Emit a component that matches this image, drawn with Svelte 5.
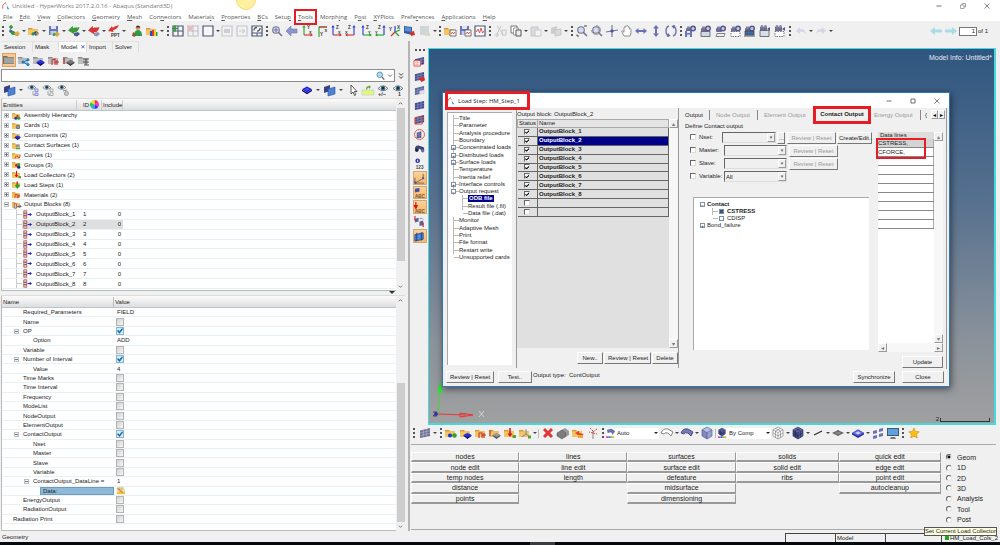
<script>
  const I = {};
  const folder = (c = '#f2c462', d = '#d99a35') =>
    `<path d="M0 3h4l1 1h5v6H0z" fill="${d}"/><path d="M0 4.5l10-.5v6H0z" fill="${c}"/>`;
  const grayFolder = folder('#bdbdbd', '#8a8a8a');
  const disk = '<path d="M1 1h9v9H1z" fill="#6a74b8"/><path d="M3 1h5v3H3z" fill="#dfe3f4"/><path d="M2.500 6h6v4h-6z" fill="#c3c9e6"/>';
  const mesh = (c = '#434c86', l = '#9aa2cc') =>
    `<path d="M1 3.500L11 1v8L1 11z" fill="${c}"/><path d="M4.300 2.700v7.600M7.600 1.900v7.800M1 6l10-2.400M1 8.500l10-2.200" stroke="${l}" stroke-width=".6" fill="none"/>`;
  const diamond = (c = '#1818c8', t = '#3f4bf0', d = '#0b0b78') =>
    `<path d="M1 6.500l5 3 5-3v1.500l-5 3.200L1 8z" fill="${d}"/><path d="M1 6.200L6 3.500l5 2.700-5 3z" fill="${c}"/><path d="M3 6.200L6 4.600l3 1.600-3 1.700z" fill="${t}"/>`;
  const smallDiamond = (c, d) => `<path d="M3.500 8l4-2.200L11.500 8l-4 3.500z" fill="${c}"/><path d="M3.500 8l4 2 4-2v1l-4 3-4-3z" fill="${d}"/>`;
  const dots = '<circle cx="5" cy="9.500" r="2" fill="#2730c8"/><circle cx="9" cy="9.500" r="2.200" fill="#2aa52a"/><circle cx="7.200" cy="7" r="1.600" fill="#d23a2a"/>';
  const hook = (c) => `<path d="M0 5.500L4.500 1l.7 2C7.500 2 9.500 3 11.500 2 10 7 8 7.500 6 7.200l.6 2.300z" fill="${c}"/>`;
  const cam = '<rect x="1" y="3" width="6" height="4" rx="1" fill="#6b6d95"/><circle cx="8" cy="3.500" r="3" fill="#56598c"/><circle cx="8" cy="3.500" r="1.500" fill="#c9cce8"/><rect x="2" y="1.500" width="3" height="2" fill="#8587a8"/>';
  const eye = '<path d="M1 4.500Q6-1 11 4.500 6 9 1 4.500z" fill="#e8eef2" stroke="#66727a" stroke-width=".9"/><circle cx="6" cy="4.200" r="2.200" fill="#39627e"/><circle cx="6" cy="4" r=".9" fill="#111"/>';
  const cube = (a, b, c, l) =>
    `<path d="M6 0l5 2.800-5 2.800L1 2.800z" fill="${a}"/><path d="M1 2.800l5 2.800V12L1 9z" fill="${b}"/><path d="M11 2.800L6 5.600V12l5-3z" fill="${c}"/><path d="M6 0l5 2.800V9l-5 3-5-3V2.800zM1 2.800l5 2.800 5-2.800M6 5.600V12${l === '#777' || l === '#222a5a' ? 'M3.500 1.400l5 2.800v6.400M8.500 1.400l-5 2.800v6.400M1 6l5 2.900L11 6' : ''}" fill="none" stroke="${l}" stroke-width=".6"/>`;
  const zoomG = '<circle cx="5" cy="5" r="3.300" fill="#d5daf0" stroke="#73758c" stroke-width="1.100"/><path d="M7.500 7.500L11 11" stroke="#73758c" stroke-width="1.600"/>';
  const axis = (v, h, r, lv, lh) =>
    `<g fill="none" stroke-width="1.100"><path d="M${r ? 9 : 3} 10V2" stroke="${v}"/><path d="M${r ? 9 : 3} 10H${r ? 1 : 11}" stroke="${h}"/></g><path d="M${r ? 9 : 3} 0l1.600 2.500h-3.200z" fill="${v}"/><path d="M${r ? 0 : 12} 10l${r ? '2.500-1.600v3.200' : '-2.500-1.600v3.200'}z" fill="${h}"/><text x="${r ? 3 : 6}" y="4" font-size="4.500" font-weight="700" font-family="Liberation Sans" fill="#333">${lv}</text><text x="${r ? 0 : 8}" y="8.500" font-size="4" font-weight="700" font-family="Liberation Sans" fill="#333">${lh}</text>`;

  I.new = '<path d="M2 4l9 6-2 1-8-4z" fill="#4a57a8"/><circle cx="5" cy="8" r="2" fill="#2c9a3b"/><path d="M6 8l4-2 2 3-4 2z" fill="#e1ad3b"/><path d="M1 2h4M3 0v4" stroke="#2b9a2b" stroke-width="1.500"/>';
  I.open = folder() + '<path d="M4 8l4-2 3 2-3 3z" fill="#4a57a8"/><circle cx="5" cy="9" r="1.600" fill="#2c9a3b"/><path d="M8 7l3 2-2 2z" fill="#d9a02e"/>';
  I.save = disk + '<path d="M6 9l3-2 3 2-3 3z" fill="#d9a940"/><circle cx="6" cy="9.500" r="1.500" fill="#3aa04a"/>';
  I.imp = hook('#3c9a3a') + '<path d="M6 8l4-1 2 2-3 2.500-3-1z" fill="#4b5791"/>';
  I.exp = hook('#d93434') + '<path d="M6 8l4-1 2 2-3 2.500-3-1z" fill="#8b93b8"/>';
  I.ppt = '<path d="M0 6l4-5 .6 1.800C7 1 9 1 11 0 9 4 7 5 5 5l.6 2z" fill="#d93434"/><text x="3" y="11.500" font-size="4.500" font-weight="700" font-family="Liberation Sans" fill="#333">PPT</text>';
  I.user = '<circle cx="7" cy="3" r="2.300" fill="#d9a06c"/><path d="M4.500 2.500Q7-1.500 9.500 2.500z" fill="#40302a"/><path d="M3 11q0-6 4-6t4 6z" fill="#2f9a48"/><path d="M2 7l3 2-1 3-3-1z" fill="#8c5a36"/>';
  I.chart = folder() + '<path d="M4 6h2v5H4z" fill="#2a50c8"/><path d="M6 5h2v6H6z" fill="#e03c2a"/><path d="M8 6h2v5H8z" fill="#f0d22a"/><path d="M10 7h1.500v4H10z" fill="#2ea04a"/>';
  const win = '<path d="M1 1h10v10H1z" fill="#f4f6fb" stroke="#4e5675" stroke-width="1.200"/>';
  I.addwin = win + '<path d="M1 6h10M6 1v10" stroke="#4e5675"/><path d="M0 3.500h6M3 .5v6" stroke="#2f9a2f" stroke-width="1.700"/>';
  I.delwin = '<g opacity=".3">' + win + '<path d="M1 6h10M6 1v10" stroke="#4e5675"/><path d="M1 1l5 5M6 1L1 6" stroke="#d22" stroke-width="1.500"/></g>';
  I.win = win;
  I.fade1 = '<g opacity=".25">' + win + '<path d="M3 4h6v4H3z" fill="#667"/></g>';
  I.fade2 = '<g opacity=".25">' + win + '<path d="M3 6h5M6 4l3 2-3 2" stroke="#667" fill="none"/></g>';
  I.syncwin = win + '<path d="M1 8h10M6 8v3" stroke="#4e5675"/><path d="M3 5.500q0-3 3-3M9 3q0 3-3 3" stroke="#555" fill="none" stroke-width="1.300"/>';
  I.fit = zoomG + '<path d="M5 2.800v4.400M2.800 5h4.400" stroke="#5a5f95" stroke-width=".8"/>';
  I.back = '<path d="M0 6l5-5v3h6v4H5v3z" fill="#8d95cf" stroke="#6e76b4" stroke-width=".6"/>';
  I.ax1 = axis('#1fa52c', '#d8312c', 0, 'Y', 'X');
  I.ax2 = '<path d="M3 12V2H11" fill="none" stroke="#1fa52c" stroke-width="1.100"/><path d="M3 2h8" stroke="#d8312c" stroke-width="1.200"/><text x="4" y="10.500" font-size="4.500" font-weight="700" font-family="Liberation Sans" fill="#333">Y</text><text x="8.500" y="6.500" font-size="4" font-weight="700" font-family="Liberation Sans" fill="#333">X</text>';
  I.ax3 = axis('#2a38d8', '#d8312c', 0, 'Z', 'X');
  I.ax4 = axis('#2a38d8', '#d8312c', 1, 'Z', 'X');
  I.ax5 = axis('#2a38d8', '#1fa52c', 0, 'Z', 'Y');
  I.ax6 = axis('#2a38d8', '#1fa52c', 1, 'Z', 'Y');
  I.iso = '<path d="M6 7V1" stroke="#2a38d8" stroke-width="1.200"/><path d="M6 7l5-2M6 7l4 4" stroke="#1fa52c" stroke-width="1.200"/><path d="M6 7L2 11" stroke="#d8312c" stroke-width="1.200"/><text x="0" y="6" font-size="4.500" font-weight="700" font-family="Liberation Sans" fill="#333">Y</text><text x="8" y="4" font-size="4.500" font-weight="700" font-family="Liberation Sans" fill="#333">X</text>';
  I.sheet = '<path d="M0 1l8 1v8L0 8z" fill="#2e5fa6"/><path d="M1 2l6 .8v4L1 6z" fill="#5d8fd2"/><path d="M6 7l4-1 1 4-4 1z" fill="#cf3430"/>';
  I.photo = '<g opacity=".3"><path d="M1 1h9v9H1z" fill="#89a"/><circle cx="6" cy="5" r="2.500" fill="#7a9"/><path d="M6 8l5 0v3H6z" fill="#9a6"/></g>';
  const doc = '<path d="M6 5h6v6H6z" fill="#fff" stroke="#555" stroke-width=".8"/><path d="M7 9l1.500-2 1 2L11 7" stroke="#c33" fill="none" stroke-width=".8"/>';
  I.opendoc = folder() + doc;
  I.savedoc = disk + doc;
  I.plot = '<path d="M1 1h10v10H1z" fill="#fff" stroke="#4e5675" stroke-width="1.200"/><path d="M2 7l2-3 1.500 4L7 3l1.500 5L10 6" stroke="#e05252" fill="none"/>';
  I.cut = '<g opacity=".25" stroke="#445" fill="none"><path d="M2 1l6 8M6 1L2 9"/><circle cx="2" cy="10" r="1.300"/><path d="M7 5h4v5H7z"/></g>';
  I.copy = '<path d="M1 1h6v7H1z" fill="#fff" stroke="#777"/><path d="M3.500 3h5v7h-5z" fill="#fff" stroke="#777" stroke-width=".7"/><path d="M6 5h5v6H6z" fill="#eee" stroke="#555"/>';
  I.paste = '<g opacity=".25"><path d="M1 2h7v9H1z" fill="#99a" stroke="#556"/><path d="M5 5h6v6H5z" fill="#fff" stroke="#556"/></g>';
  I.pasteb = '<g opacity=".25"><path d="M1 3l6-2v7l-6 1z" fill="#667"/><path d="M5 5l6-1v6l-6 1z" fill="#99a" stroke="#556"/></g>';
  I.zoomw = zoomG + '<path d="M1 11V9.500M1 11h2M8 1h3" stroke="#444" stroke-width="1"/>';
  I.zoomc = zoomG + '<path d="M5 .5a4.500 4.500 0 1 1-4.500 4.500" fill="none" stroke="#888" stroke-width=".8"/>';
  I.pan = '<path d="M6 0v12M0 7l12-2" stroke="#6a70a8" stroke-width="1.100"/><path d="M6 4l2 2-2 2-2-2z" fill="#4f5690"/>';
  I.hand = '<path d="M3 11L.7 6.500q0-1 1-.5L3 7.300V2.500q.7-1 1.300 0V1.300q.9-1 1.500 0V1q.9-.9 1.500.3v1q.9-.7 1.400.3V4q1-.5 1.300.5V8L9 11z" fill="#fff" stroke="#777" stroke-width=".8"/>';
  I.horiz = '<path d="M0 6l3.500-3v2h5V3L12 6 8.500 9V7h-5v2z" fill="#6b71b5"/>';
  I.vert = '<path d="M6 0l3 3.500H7v5h2L6 12 3 8.500h2v-5H3z" fill="#6b71b5"/>';
  I.rot = '<path d="M4 1q-3 1-3 5t3 5M8 11q3-1 3-5T8 1" fill="none" stroke="#7379b5" stroke-width="1.500"/><path d="M3 8l2.500 3L2 12zM9 4L6.500 1 10 0z" fill="#5e64a5"/>';
  I.cam1 = cam + '<path d="M0 6h7v6H0z" fill="#6a74b8"/><path d="M2 6h3v2H2zM2 9.500h3V12H2z" fill="#e6e9f6"/>';
  I.cam2 = cam + '<path d="M1 6.500h9v5H1z" fill="#cfd8e6" stroke="#555" stroke-width=".8"/>';
  I.cam3 = cam + '<path d="M2 8.500h8l-1 3H1z" fill="#eee" stroke="#666" stroke-width=".8"/>';
  I.cam4 = cam + '<path d="M1 6.500h9v5H1z" fill="#fff" stroke="#555" stroke-width=".8" stroke-dasharray="1.500 1"/>';
  I.cam5 = cam + '<path d="M1 6h9v4H1z" fill="#3e6ca8" stroke="#444" stroke-width=".8"/><path d="M0 11h11" stroke="#555"/>';
  const vid = '<path d="M1 2h7v4H1z" fill="#6b6d95"/><path d="M8 4l3-2v4z" fill="#56598c"/><circle cx="3" cy="1.500" r="1.500" fill="#8587a8"/><circle cx="6.500" cy="1.500" r="1.500" fill="#8587a8"/>';
  I.cam6 = vid + '<path d="M1 5.500h9v6H1z" fill="#d6e0ec" stroke="#555" stroke-width=".8"/>';
  I.cam7 = vid + '<path d="M1 6.500h9v5H1z" fill="#fff" stroke="#555" stroke-width=".8" stroke-dasharray="1.500 1"/>';
  I.undo = '<path d="M1 6l4-4v2q5-.5 6 5-2-3-6-2v2z" fill="#c9c9e2" opacity=".7"/>';
  I.redo = '<path d="M11 6L7 2v2Q2 3.500 1 9q2-3 6-2v2z" fill="#c9c9e2" opacity=".7"/>';
  I.left = '<path d="M0 6l5-4v2.500h7v3H5V10z" fill="#a9dbe8"/>';
  I.right = '<path d="M12 6L7 2v2.500H0v3h7V10z" fill="#a9dbe8"/>';

  I.gf = '<path d="M0 2h4l1 1h6v7H0z" fill="#6f6f6f"/><path d="M1 3.500l10 0v6H1z" fill="#a2a2a2"/>';
  I.gnodes = grayFolder + '<path d="M5 8l5-2M5 8l5 3" stroke="#1b7fc8"/><circle cx="5" cy="8" r="1.500" fill="#1b7fc8"/><circle cx="10" cy="5.800" r="1.500" fill="#1b7fc8"/><circle cx="10" cy="10.500" r="1.500" fill="#1b7fc8"/>';
  I.gcomp = grayFolder + smallDiamond('#2731dd', '#101080');
  I.gmat = grayFolder + '<path d="M4 11V6l3-1v6M7 8h4M9 6v5" stroke="#c9302c" fill="none" stroke-width="1.100"/>';
  I.gprop = grayFolder + '<path d="M1 4v6" stroke="#b22" stroke-width="1.200"/>' + smallDiamond('#777', '#444');
  I.gcard = grayFolder + '<path d="M5 5h6M5 8h6M6 11h5M8 5v6" stroke="#555" stroke-width="1.200"/>';
  I.mesh = '<path d="M0 3l6-2v6l-6 2z" fill="#39447e"/><path d="M4 5l7-2v7l-7 2z" fill="#4a83d8" stroke="#2b4f94" stroke-width=".6"/>';
  const eyeS = '<g transform="scale(.8)">' + eye + '</g>';
  I.eyet1 = eyeS + '<path d="M6 7v4h2" stroke="#888" fill="none" stroke-width=".7"/><path d="M8 5h3v2.500H8zM8 9h3v2.500H8z" fill="#dfe4ff" stroke="#66c" stroke-width=".7"/>';
  I.eyet2 = eyeS + '<path d="M6 7v4h2" stroke="#888" fill="none" stroke-width=".7"/><path d="M8 5h3v2.500H8zM8 9h3v2.500H8z" fill="#fff" stroke="#888" stroke-width=".7"/>';
  I.eyet3 = eyeS + '<path d="M6 7l4-1M7 10h4" stroke="#888" fill="none"/><circle cx="9.500" cy="9.500" r="2" fill="#ccc" stroke="#888" stroke-width=".7"/>';
  I.comp = '<path d="M1 5.500l5 3 5-3v1.500l-5 3.200L1 7z" fill="#0b0b78"/><path d="M1 5.200L6 2.500l5 2.700-5 3z" fill="#1818c8"/><path d="M3 5.200L6 3.600l3 1.600-3 1.700z" fill="#3f4bf0"/>';
  I.cursor = '<path d="M4 1v9l2-2 1.500 3.500 1.300-.6L7.400 7.500H10z" fill="#fff" stroke="#333" stroke-width=".8"/>';
  I.yellow = '<path d="M0 6h12v5H0z" fill="#f3f07a" stroke="#9be3dc" stroke-width=".7"/><path d="M4 5q0-3 3-3V1l2 2-2 2V3.500Q5 3.500 5 6z" fill="#69a83e"/>';
  I.eyepm = eye + '<text x="1" y="12" font-size="5.500" font-weight="700" font-family="Liberation Sans" fill="#333">+/−</text>';
  I.eye1 = eye + '<text x="6" y="12" font-size="5" font-weight="700" font-family="Liberation Sans" fill="#333">1</text>';

  I.v1 = mesh() + '<path d="M0 5h7v6H0z" fill="#fff" stroke="#e0493a"/><path d="M1 7h5M1 9h5M3.500 6v5" stroke="#e88" stroke-width=".6"/>';
  I.v2 = mesh() + '<path d="M5 8l6-2 1 4-4 2z" fill="#d22b2b"/>';
  I.v3 = mesh('#5a6296') + '<path d="M6 6.500l5-1.300V9L6 10.500z" fill="#dde"/>';
  I.v4 = mesh('#3d4790');
  I.v5 = mesh() + '<path d="M1 4h8v7H1z" fill="none" stroke="#e0493a"/>';
  I.v6 = '<circle cx="6" cy="6" r="5.400" fill="#f4f4f4" stroke="#e0493a"/><path d="M3 4l5-1.500v7L3 10z" fill="#434c86"/><path d="M5.500 3v7M3 6l5-1M3 8l5-1" stroke="#9aa2cc" stroke-width=".6"/>';
  I.v7 = '<path d="M1 7Q1 2 6 3l5 2v4L9 9 6 6 4 9z" fill="#3b4673"/><circle cx="3" cy="8" r="1.800" fill="#20264a"/><circle cx="9.500" cy="8.500" r="1.800" fill="#5b6fb5"/>';
  I.v8 = '<circle cx="4" cy="3" r="2.500" fill="#2730b8"/><path d="M4 1.800v2.500" stroke="#fff"/><text x="2" y="12" font-size="5" font-weight="700" font-family="Liberation Sans" fill="#444">123</text>';
  I.v9 = '<path d="M1 5v6l9-5V1M1 11h10" fill="none" stroke="#6a5a4a" stroke-width=".9"/><circle cx="1.500" cy="10.500" r="1.300" fill="#4a52a0"/><circle cx="10" cy="5.500" r="1.200" fill="#4a52a0"/>';
  I.v10 = '<path d="M1 2l5-1v4L1 6z" fill="#4250a8"/><text x="1" y="11.500" font-size="5" font-weight="700" font-family="Liberation Sans" fill="#7a5030">ABC</text>';
  I.v11 = '<path d="M2 0v5M.5 4L2 7l1.500-3z" stroke="#d11" fill="#d11" stroke-width="1.200"/><text x="1" y="11.500" font-size="5" font-weight="700" font-family="Liberation Sans" fill="#7a5030">ABC</text>';
  I.v12 = '<path d="M1 3l4-1v4L1 7zM6 6l4-1v5L6 11z" fill="#5a6296"/><path d="M1 0v5M10 7v5" stroke="#c22" stroke-width="1.200"/><path d="M6 3q3-2 4 1" fill="none" stroke="#888"/>';
  I.v13 = '<path d="M1 4l9-2v7l-9 2z" fill="#4b8be0" stroke="#2b4f94"/><path d="M3 2v9M8 1.500v9" stroke="#24407c"/>';

  I.bmesh = mesh('#6d7292', '#b5b9cf');
  I.bassem = folder() + '<circle cx="5" cy="8.500" r="2" fill="#2730c8"/><circle cx="9.500" cy="8.500" r="2.300" fill="#2aa52a"/>';
  I.bcomp = folder() + smallDiamond('#2731dd', '#101080');
  I.bmat = folder() + '<path d="M4 11V6h3v5M7 8h4M9 6v5" stroke="#c9302c" fill="none" stroke-width="1.100"/>';
  I.bprop = folder() + '<path d="M1 3v6" stroke="#b22"/>' + smallDiamond('#999', '#555');
  I.bload = folder() + '<path d="M6 1v7" stroke="#d11" stroke-width="1.500"/><path d="M3.500 6.500h5L6 10z" fill="#d11"/><path d="M8.500 8h3.500v3H8.500z" fill="#54a52e"/>';
  I.bsys = folder() + '<path d="M7 2v5l4 3M7 7l-4 3" stroke="#7a88a8" fill="none"/><path d="M9 8.500h3v3H9z" fill="#54a52e"/>';
  I.del = '<path d="M3 1l3 3 3-3 2 2L8.200 6 11 9 9 11 6 8.200 3 11 1 9l2.800-3L1 3z" fill="#dc3838"/>';
  I.card = '<path d="M3 4l5-3 4 3v4l-5 3z" fill="#9a9a9a"/><path d="M0 6l5-3 4 3v3l-4 3-5-3z" fill="#7c7c7c" stroke="#555" stroke-width=".5"/>';
  I.org = folder() + '<path d="M3 6l4-2v2l5 1-5 3-1-2z" fill="#e0432a"/><path d="M6 8h5v3H6z" fill="#f2a53a"/>';
  I.renum = '<path d="M6 4v8" stroke="#999" stroke-width="1.200"/><path d="M6 4L3 1M6 5l4-3M6 6l4 1M6 6L2 5" stroke="#d44" stroke-dasharray="2 1"/>';
  const bar = '<path d="M0 10h3v2H0z" fill="#d33ad3"/><path d="M3 10h2v2H3z" fill="#3a5fe0"/><path d="M5 10h2v2H5z" fill="#2ec05a"/><path d="M7 10h3v2H7z" fill="#f0b02a"/>';
  I.geo = '<path d="M1 2l6-1 4 3-3 4-2-3-4 1z" fill="#6a72ae"/>' + bar;
  I.elem = '<g transform="scale(.8)">' + cube('#6a70a8', '#3f4678', '#535b94', '#222a5a') + '</g>' + bar;
  I.surfw = '<path d="M0 6q2-5 7-4l5 3-2 4-3-3q-3-1-4 1z" fill="#fff" stroke="#777" stroke-width=".9"/>';
  I.surf = '<path d="M0 6q2-5 7-4l5 3-2 4-3-3q-3-1-4 1z" fill="#737bb8" stroke="#3f4678" stroke-width=".9"/>';
  I.solid = cube('#b9bfe4', '#8289bf', '#9aa1d2', '#4a5190');
  I.wcube = cube('#fff', '#fff', '#fff', '#777');
  I.scube = cube('#6a70a8', '#3f4678', '#535b94', '#222a5a');
  I.line = '<path d="M2 8l8-4" stroke="#333" stroke-width="1.300"/>';
  I.plane = '<path d="M0 6l6-3 6 3-6 3z" fill="#666"/><path d="M3 4.500l6 3M9 4.500l-6 3" stroke="#aaa" stroke-width=".6"/>';
  I.plate = '<path d="M0 6l6-3.500L12 6v1.500L6 11 0 7.500z" fill="#2a3296"/><path d="M0 6l6-3.500L12 6 6 9z" fill="#5b66dc"/><path d="M3 6l3-1.700L9 6 6 7.500z" fill="#c8cdf8"/>';
  I.shrink = '<path d="M1 4l4-1v3L1 7zM7 2l4-1v3L7 5zM1 9l4-1v3l-4 1zM7 7l4-1v3l-4 1z" fill="#6a72b2"/>';
  I.monitor = '<path d="M0 1h12v8H0z" fill="#4d5560"/><path d="M1 2h10v6H1z" fill="#58a5e6"/><path d="M4 10h4l1 2H3z" fill="#777"/>';
  I.star = '<path d="M6 1l1.500 3.400 3.700.4-2.700 2.500.8 3.700L6 9.200 2.700 11l.8-3.700L.8 4.800l3.700-.4z" fill="#fbbf10" stroke="#d08a10" stroke-width=".6"/>';

  I.tAssembly = folder() + dots;
  I.tCards = folder() + '<circle cx="8" cy="8" r="3" fill="#777"/><circle cx="8" cy="8" r="1" fill="#ccc"/>';
  I.tComponents = folder() + smallDiamond('#2731dd', '#101080');
  I.tContact = folder() + '<path d="M5 5h5v3H5z" fill="#8a92c0"/><path d="M5 9h6v2H5z" fill="#44a844"/>';
  I.tCurves = folder() + '<path d="M4 10q2-6 4-2t3-3" fill="none" stroke="#b33" stroke-width="1.100"/>';
  I.tGroups = folder() + '<circle cx="6" cy="7" r="2" fill="#d22"/><circle cx="9" cy="6" r="2" fill="#2a2"/><circle cx="9" cy="9.500" r="2.200" fill="#222c88"/>';
  I.tLoads = I.bload;
  I.tSteps = folder() + '<path d="M7 2v6" stroke="#d22" stroke-width="2"/><path d="M4 7l3-2 4 2-4 5z" fill="#2aa52a"/>';
  I.tMaterials = I.bmat;
  I.tOutput = folder() + '<path d="M3 5h3v6H3z" fill="#d9c4c4" stroke="#744" stroke-width=".8"/><path d="M7 8.500h5M10 6.500l2 2-2 2" stroke="#22c" fill="none"/>';
  I.block = '<path d="M1 1h4v10H1z" fill="#f4d0d0" stroke="#a33" stroke-width=".9"/><path d="M1 4.300h4M1 7.600h4" stroke="#333"/><path d="M6 6h5M9 4l2 2-2 2" stroke="#2222cc" fill="none" stroke-width="1.300"/>';
  I.data = '<path d="M1 6h11v5H1z" fill="#f3c23f"/><path d="M1 1h10v7H1z" fill="#e9e2c8"/><path d="M1 4h10M5 1v7M8 1v7" stroke="#b99a58" stroke-width=".6"/><path d="M2 3l7 6" stroke="#d88a1a" stroke-width="1.500"/>';
  I.wheel = '<path d="M6 6V0a6 6 0 0 1 5.200 3z" fill="#f33"/><path d="M6 6l5.200-3a6 6 0 0 1 0 6z" fill="#e3c"/><path d="M6 6l5.200 3A6 6 0 0 1 6 12z" fill="#33e"/><path d="M6 6v6a6 6 0 0 1-5.200-3z" fill="#2ad"/><path d="M6 6L.8 9a6 6 0 0 1 0-6z" fill="#2c4"/><path d="M6 6L.8 3A6 6 0 0 1 6 0z" fill="#ed3"/>';
  I.logo = '<path d="M1 10Q0 3 6 1" fill="none" stroke="#e0443c" stroke-width="1.300"/><path d="M7 5l4 6H8z" fill="#2aa6de"/><path d="M5 2l3 3" stroke="#f0a03a"/>';
  I.search = '<circle cx="5" cy="5" r="3.700" fill="#a8dcf2" stroke="#5a8fb0" stroke-width="1.200"/><path d="M8 8l3 3.500" stroke="#666" stroke-width="1.700"/>';
  I.chev = '<path d="M2 4l4 4 4-4" fill="none" stroke="#444" stroke-width="1.600"/>';
  I.chevup = '<path d="M2 8l4-4 4 4" fill="none" stroke="#444" stroke-width="1.800"/>';
  I.dchev = '<path d="M3 2l3 3 3-3M3 6.500l3 3 3-3" fill="none" stroke="#444" stroke-width="1.500"/>';
  I.min = '<path d="M1 6h10" stroke="#444" stroke-width="1.500"/>';
  I.max = '<path d="M2 2h8v8H2z" fill="none" stroke="#444" stroke-width="1.500"/>';
  I.restore = '<path d="M1 4h7v7H1zM4 4V1h7v7H8" fill="none" stroke="#777" stroke-width="1.300"/>';
  I.close = '<path d="M1 1l10 10M11 1L1 11" stroke="#555" stroke-width="1.400"/>';

  const menus = ['_File', '_Edit', '_View', '_Collectors', '_Geometry', '_Mesh', 'Con_nectors', 'Materia_ls', '_Properties', '_BCs', 'Setu_p', '_Tools', 'Morph_ing', 'P_ost', '_XYPlots', 'Prefe_rences', '_Applications', '_Help'].map((m) => {
    const i = m.indexOf('_');
    return [m.slice(0, i), m[i + 1], m.slice(i + 2)];
  });
  const top = [
    { w: 120, grip: true, items: 'new ^ open ^ save ^ imp ^ exp ^ ppt ^' },
    { w: 36, pad: true, items: 'user chart ^' },
    { w: 93, grip: true, items: 'addwin delwin win ^ fade1 fade2 syncwin' },
    { w: 167, grip: true, items: 'fit back ax1 ax2 ax3 ax4 ax5 ax6 iso sheet photo ^' },
    { w: 44, grip: true, items: 'opendoc savedoc plot' },
    { w: 76, grip: true, items: 'cut copy ^ paste ^ pasteb ^' },
    { w: 103, grip: true, items: 'zoomw zoomc pan hand horiz vert rot' },
    { w: 103, grip: true, items: 'cam1 cam2 cam3 cam4 cam5 cam6 cam7' },
    { w: 40, grip: true, items: 'undo ^ redo ^' }
  ];
  const entities = [
    ['tAssembly', 'Assembly Hierarchy'], ['tCards', 'Cards (1)'], ['tComponents', 'Components (2)'], ['tContact', 'Contact Surfaces (1)'],
    ['tCurves', 'Curves (1)'], ['tGroups', 'Groups (3)'], ['tLoads', 'Load Collectors (2)'], ['tSteps', 'Load Steps (1)'],
    ['tMaterials', 'Materials (2)'], ['tOutput', 'Output Blocks (8)']
  ];
  const blocks = [1, 2, 3, 4, 5, 6, 7, 8];
  const props = [
    [1, 'Required_Parameters', 'FIELD'], [1, 'Name', false], [1, 'OP', true, '-'], [2, 'Option', 'ADD'], [1, 'Variable', false],
    [1, 'Number of Interval', true, '-'], [2, 'Value', '4'], [1, 'Time Marks', false], [1, 'Time Interval', false], [1, 'Frequency', false],
    [1, 'ModeList', false], [1, 'NodeOutput', false], [1, 'ElementOutput', false], [1, 'ContactOutput', true, '-'], [2, 'Nset', false],
    [2, 'Master', false], [2, 'Slave', false], [2, 'Variable', false], [2, 'ContactOutput_DataLine =', '1', '-'], [3, 'Data:', null],
    [1, 'EnergyOutput', false], [1, 'RadiationOutput', false], [0, 'Radiation Print', false]
  ];
  const steps = [
    ['Title'], ['Parameter'], ['Analysis procedure'], ['Boundary'], ['Concentrated loads', '+'], ['Distributed loads', '+'], ['Surface loads', '+'],
    ['Temperature'], ['Inertia relief'], ['Interface controls', '+'], ['Output request', '−'], ['ODB file', '', 1], ['Result file (.fil)', '', 1],
    ['Data file (.dat)', '', 1], ['Monitor'], ['Adaptive Mesh'], ['Print'], ['File format'], ['Restart write'], ['Unsupported cards']
  ];
  const panel = [
    ['nodes', 'node edit', 'temp nodes', 'distance', 'points'],
    ['lines', 'line edit', 'length'],
    ['surfaces', 'surface edit', 'defeature', 'midsurface', 'dimensioning'],
    ['solids', 'solid edit', 'ribs'],
    ['quick edit', 'edge edit', 'point edit', 'autocleanup']
  ];
  const pages = ['Geom', '1D', '2D', '3D', 'Analysis', 'Tool', 'Post'];
  let page = $state('Geom');
</script>

{#snippet ico(k)}<svg class="ico" viewBox="0 0 12 12" aria-hidden="true">{@html I[k]}</svg>{/snippet}

{#snippet tools(list)}
  {#each list.split(' ') as t}
    {#if t === '^'}<span class="caret"></span>
    {:else}<button class="tool" aria-label={t}>{@render ico(t)}</button>{/if}
  {/each}
{/snippet}

{#snippet scroll(top, size)}
  <div class="scroll">
    {@render ico('chevup')}
    <div class="track"><i style="top:{top}%;height:{size}%"></i></div>
    {@render ico('chev')}
  </div>
{/snippet}

<div class="app">
  <header>
    <div class="title">
      {@render ico('logo')}<span>Untitled - HyperWorks 2017.2.0.16 - Abaqus (Standard3D)</span>
      <div class="winbtns">
        {#each ['min', 'restore', 'close'] as b}<button aria-label={b}>{@render ico(b)}</button>{/each}
      </div>
    </div>
    <i class="halo"></i>
    <nav>
      {#each menus as [a, u, b]}<button class:marked={u === 'T'}>{a}<u>{u}</u>{b}</button>{/each}
    </nav>
    <div class="toolbar">
      {#each top as g}
        {#if g.grip}<i class="grip"></i>{/if}
        <div class="group" class:pad={g.pad} style="width:{g.w}px">{@render tools(g.items)}</div>
      {/each}
      <div class="pager">
        {@render tools('left right')}
        <input aria-label="Page" value="1" /><span>of 1</span>
      </div>
    </div>
  </header>

  <main>
    <section class="left">
      <div class="tabs">
        <button class="t1">Session</button><button class="t2">Mask</button><button class="t3 on">Model<b>✕</b></button><button class="t2">Import</button><button class="t2">Solver</button>
      </div>
      <div class="views">{@render tools('gf gnodes gcomp gmat gprop gcard')}</div>
      <div class="search">
        <div class="field"><input aria-label="Search" />{@render ico('search')}{@render ico('chev')}</div>
        {@render ico('dchev')}
      </div>
      <div class="filters">
        {@render tools('mesh ^ eyet1 eyet2 eyet3')}
        <span class="push"></span>
        {@render tools('comp ^ mesh ^ cursor yellow eyepm eye1')}
      </div>

      <div class="pane ents">
        <div class="list">
          <div class="head"><span class="c1">Entities</span><span class="c2">ID</span><span class="c3">{@render ico('wheel')}</span><span class="c4">Include</span></div>
          <div class="rows">
            {#each entities as [k, name], i}
              <div class="row"><i class="box" class:open={i === 9}></i>{@render ico(k)}<span class="lbl">{name}</span></div>
            {/each}
            {#each blocks as n}
              <div class="row sub">
                <i class="twig"></i>
                <div class="hit" class:sel={n === 2}>{@render ico('block')}<span class="bn">OutputBlock_{n}</span><span class="id">{n}</span><span class="inc">0</span></div>
              </div>
            {/each}
          </div>
        </div>
        {@render scroll(0, 88)}
      </div>
      <div class="split"><i></i></div>
      <div class="pane props">
        <div class="list">
          <div class="head"><span class="p1">Name</span><span>Value</span></div>
          <div class="rows">
            {#each props as [d, name, v, box]}
              <div class="row">
                <span class="pname d{d}" class:hot={v === null}>{#if box}<i class="box open"></i>{/if}{name}</span>
                {#if v === null}<button class="mini" aria-label="Edit data">{@render ico('data')}</button>
                {:else if typeof v === 'boolean'}<input class="glass" type="checkbox" checked={v} aria-label={name} />
                {:else}<span class="pval">{v}</span>{/if}
              </div>
            {/each}
          </div>
        </div>
        {@render scroll(36, 64)}
      </div>
    </section>

    <section class="right">
      <div class="work">
        <aside><i class="grip h"></i>
          <div class="vtools">
            {#each Array.from({ length: 13 }, (_, i) => i + 1) as n}
              <button class="tool" class:lit={[9, 10, 11, 13].includes(n)} aria-label="View {n}">{@render ico('v' + n)}</button>
            {/each}
          </div>
        </aside>
        <div class="canvas">
          <span class="info">Model Info: Untitled*</span>
          <svg class="triad" viewBox="0 0 56 50" aria-hidden="true">
            <path d="M9 40L11 12" stroke="#3ddc3d" /><path d="M11 6l3 13H8z" fill="#3ddc3d" />
            <path d="M9 40l28 1" stroke="#e33" /><path d="M44 41l-13-2v4z" fill="none" stroke="#e33" />
            <circle cx="7" cy="40" r="2" fill="#33c" /><path d="M4 38h4l-4 4h4" fill="none" stroke="#335" stroke-width=".8" />
            <path d="M50 37l5 6M55 37l-5 6" stroke="#ddd" stroke-width=".8" />
          </svg>
          <div class="scale"><span>2</span><i></i></div>

          <div class="dialog" role="dialog" aria-label="Load Step">
            <div class="dtitle">
              <span class="dname marked">{@render ico('logo')}Load Step: HM_Step_1</span>
              <div class="dbtns">{#each ['min', 'max', 'close'] as b}<button aria-label={b}>{@render ico(b)}</button>{/each}</div>
            </div>
            <div class="dbody">
              <div class="steps">
                <div class="steprows">
                  {#each steps as [t, b, sub], i}
                    <div class="step" class:child={sub}><i class="twig" class:end={i === 13 || i === 19}></i>{#if b}<i class="pm">{b}</i>{/if}<span class:pick={i === 11}>{t}</span></div>
                  {/each}
                </div>
              </div>
              <div class="mid">
                <div class="cap">Output block: OutputBlock_2</div>
                <div class="grid">
                  <div class="gtable">
                    <table>
                      <thead><tr><th class="st">Status</th><th>Name</th></tr></thead>
                      <tbody>
                        {#each [...blocks, 0, 0] as n}
                          <tr class:active={n === 2}><td class="st"><input type="checkbox" class="chk" checked={n > 0} aria-label="Status" /></td><td>{n ? 'OutputBlock_' + n : ''}</td></tr>
                        {/each}
                      </tbody>
                    </table>
                  </div>
                  <div class="oldscroll"><button aria-label="Up">▴</button><button aria-label="Down">▾</button></div>
                </div>
                <div class="acts"><button class="btn n">New..</button><button class="btn">Review | Reset</button><button class="btn n">Delete</button></div>
              </div>
              <div class="det">
                <div class="dtabs">
                  <button class="a">Output</button><button class="b dim">Node Output</button><button class="c dim">Element Output</button><button class="d marked">Contact Output</button><button class="e dim">Energy Output</button><span class="sq">&#123;</span>
                  <span class="arrows"><button aria-label="Previous">◂</button><button aria-label="Next">▸</button></span>
                </div>
                <div class="cap2">Define Contact output</div>
                <div class="cols">
                  <div class="formcol">
                    <div class="form">
                      {#each ['Nset:', 'Master:', 'Slave:', 'Variable:'] as f, i}
                        <div class="frow">
                          <label><input type="checkbox" class="chk" />{f}</label>
                          <div class="combo"><select aria-label={f}><option>{i === 3 ? 'All' : ''}</option></select><i>▾</i></div>
                          {#if i === 0}<button class="btn dots" aria-label="Browse">...</button>{/if}
                          {#if i < 3}<button class="btn dim rr">Review | Reset</button>{/if}
                          {#if i === 0}<button class="btn ce">Create/Edit..</button>{/if}
                        </div>
                      {/each}
                    </div>
                    <div class="ctree">
                      <div class="step"><i class="pm">−</i><b>Contact</b></div>
                      <div class="step child"><i class="twig"></i><input type="checkbox" class="cb" id="cs" checked /><label for="cs"><b>CSTRESS</b></label></div>
                      <div class="step child"><i class="twig end"></i><input type="checkbox" class="cb" id="cd" /><label for="cd">CDISP</label></div>
                      <div class="step"><i class="pm">+</i><span>Bond_failure</span></div>
                    </div>
                  </div>
                  <div class="lines">
                    <div class="lbody">
                      <div class="ltab">
                        <table>
                          <thead><tr><th>Data lines</th></tr></thead>
                          <tbody>
                            {#each ['CSTRESS,', 'CFORCE,', '', '', '', '', '', '', '', ''] as l, i}<tr><td class:first={i === 0}>{l}</td></tr>{/each}
                          </tbody>
                        </table>
                        <i class="frame"></i>
                      </div>
                      <div class="oldscroll"><button aria-label="Up">▴</button><button aria-label="Down">▾</button></div>
                    </div>
                    <div class="oldscroll hz"><button aria-label="Left">◂</button><button aria-label="Right">▸</button></div>
                    <button class="btn upd">Update</button>
                  </div>
                </div>
              </div>
            </div>
            <div class="dfoot">
              <button class="btn w48">Review | Reset</button><button class="btn w34">Test..</button><span>Output type:&nbsp; ContOutput</span>
              <button class="btn sync">Synchronize</button><button class="btn w41">Close</button>
            </div>
          </div>
        </div>
      </div>

      <div class="vis">
        <i class="grip"></i>
        <div class="group" style="width:21px">{@render tools('bmesh ^')}</div>
        <i class="grip"></i>
        <div class="group" style="width:93px">{@render tools('bassem bcomp bmat bprop bload bsys ^')}</div>
        <i class="bar"></i>
        <div class="group" style="width:59px">{@render tools('del card org renum')}</div>
        <i class="grip"></i>
        <div class="mode">{@render ico('geo')}<select aria-label="Geometry color mode"><option>Auto</option></select><span class="dn"></span></div>
        <div class="group" style="width:55px">{@render tools('surfw ^ surf ^ solid')}</div>
        <i class="bar"></i>
        <div class="mode">{@render ico('elem')}<select aria-label="Element color mode"><option>By Comp</option></select><span class="dn"></span></div>
        <div class="group" style="width:129px">{@render tools('wcube ^ scube ^ line ^ plane ^ plate ^ shrink monitor')}</div>
        <i class="grip"></i>
        <div class="group" style="width:15px">{@render tools('star')}</div>
      </div>

      <div class="panel">
        <div class="pcols">
          {#each panel as col}
            <div class="pcol">{#each col as c}<button>{c}</button>{/each}</div>
          {/each}
        </div>
        <div class="pages" role="radiogroup" aria-label="Page">
          {#each pages as p}
            <label><input type="radio" name="page" value={p} bind:group={page} />{p}</label>
          {/each}
        </div>
      </div>
    </section>
  </main>

  <footer>
    <span class="msg">Geometry</span>
    <span class="cell"></span><span class="cell">Model</span><span class="cell w"></span>
    <span class="loadcol"><i></i>HM_Load_Cols_2</span>
    <span class="tip">Set Current Load Collector</span>
  </footer>
  <div class="taskbar"><i></i></div>
</div>

<style>
  :global(*) { box-sizing: border-box; }
  :global(body) { margin: 0; background: #f0f0f0; }
  .app { display: flex; flex-direction: column; height: 100vh; overflow: hidden; background: #f0f0f0; color: #1c1c1c; font: 6px/8px "Liberation Sans", Arial, sans-serif; }
  button, input, select { font: inherit; color: inherit; margin: 0; padding: 0; border: 0; border-radius: 0; background: none; appearance: none; outline: none; }
  button, label, span { white-space: nowrap; }
  table { border-collapse: collapse; }
  .ico { width: 12px; height: 12px; flex: none; display: block; overflow: visible; }
  .tool { flex: 15 1 0; min-width: 0; height: 14px; display: flex; align-items: center; justify-content: center; }
  .caret { flex: 5 1 0; display: flex; justify-content: center; align-items: center; }
  .caret::before { content: ""; border: 2px solid transparent; border-top-color: #444; border-bottom: 0; }
  .grip { width: 6px; height: 13px; flex: none; background: radial-gradient(circle at 3px 2px, #555 1px, transparent 1px) 0 0 / 6px 4px; }
  .grip.h { width: 14px; height: 4px; background-size: 4px 4px; }
  .group { display: flex; align-items: center; flex: none; }
  .marked { outline: 3px solid #e81c24; outline-offset: -1px; }

  header { position: relative; flex: none; background: #fff; font-family: "Open Sans", sans-serif; color: #777; }
  .title { display: flex; align-items: center; height: 12px; padding-left: 2px; gap: 2px; }
  .title > .ico { width: 8px; height: 8px; }
  .winbtns { margin-left: auto; display: flex; gap: 18px; padding-right: 10px; }
  .winbtns .ico { width: 6px; height: 6px; }
  .halo { position: absolute; left: 236px; top: -10px; width: 20px; height: 20px; border-radius: 50%; background: #fff0a0; border: 1px solid #f2dc7c; }
  nav { display: flex; gap: 7px; height: 9px; padding-left: 3px; align-items: center; }
  nav button { line-height: 8px; color: #555; }
  nav u { text-decoration-thickness: 1px; text-underline-offset: 1px; }
  nav .marked { outline-offset: 2px; outline-width: 2px; position: relative; z-index: 2; }
  .toolbar { display: flex; align-items: center; height: 20px; background: #f0f0f0; }
  .pad { margin-left: 3px; }
  .pager { margin-left: auto; padding-right: 12px; display: flex; align-items: center; color: #222; font-family: "Liberation Sans", sans-serif; }
  .pager .tool { flex: none; width: 15px; }
  .pager input { width: 18px; height: 9px; border: 1px solid #777; background: #fff; text-align: right; padding-right: 1px; }
  .pager span { padding-left: 1px; }

  main { flex: 1; min-height: 0; display: flex; }
  .left { flex: 0 0 41%; display: flex; flex-direction: column; border-right: 2px solid #b4b4b4; padding-right: 3px; min-width: 0; }
  .tabs { display: flex; height: 11px; flex: none; padding-left: 2px; }
  .tabs button { text-align: left; padding-left: 2px; border-right: 1px solid #ddd; border-top: 1px solid #e4e4e4; width: 26px; }
  .tabs .t1 { width: 31px; }
  .tabs .t3 { width: 28px; }
  .tabs .on { background: #fff; display: flex; align-items: center; gap: 3px; }
  .tabs b { font: 6px/8px "DejaVu Sans", sans-serif; color: #44c; }
  .views { display: flex; height: 16px; align-items: center; padding-left: 2px; flex: none; }
  .views .tool { flex: none; width: 15px; }
  .views .tool:first-child { width: 14px; background: #fbc98e; border: 1px solid #d8a262; }
  .search { display: flex; align-items: center; gap: 2px; flex: none; height: 15px; padding: 1px 0; }
  .field { flex: 1; display: flex; align-items: center; height: 13px; border: 1px solid #8c8c8c; background: #fff; margin-left: 1px; }
  .field input { flex: 1; min-width: 0; }
  .field .ico { width: 9px; height: 9px; }
  .field .ico:last-child { width: 6px; margin: 0 1px 0 2px; }
  .search > .ico { width: 8px; height: 8px; }
  .filters { display: flex; align-items: center; flex: none; height: 15px; padding: 0 0 2px 2px; }
  .filters .tool { flex: none; width: 15px; }
  .filters .caret { flex: none; width: 8px; }
  .push { flex: 1; }

  .pane { display: flex; min-height: 0; margin-left: 1px; border-top: 1px solid #ddd; }
  .ents { flex: 193 1 0; }
  .props { flex: 236 1 0; }
  .list { flex: 1; min-width: 0; background: #fff; border-left: 1px solid #bbb; overflow: hidden; border-bottom: 1px solid #bbb; }
  .head { display: flex; height: 12px; align-items: center; background: linear-gradient(#fbfbfb, #dedede); border-bottom: 1px solid #bbc6ce; }
  .head span { height: 10px; line-height: 10px; padding-left: 1px; }
  .c1 { width: 74px; }
  .c2 { width: 13px; border-left: 1px solid #ccc; text-align: right; }
  .c3 { width: 12px; display: flex; align-items: center; }
  .c3 .ico { width: 8px; height: 8px; margin-left: 1px; }
  .c4 { width: 22px; border: solid #ccc; border-width: 0 1px; }
  .rows { display: grid; grid-auto-rows: 1fr; }
  .ents .rows { height: 178px; }
  .props .rows { height: 216px; }
  .row { display: flex; align-items: center; min-height: 0; border-bottom: 1px solid #e6f2f6; }
  .ents .ico { margin: 0; width: 9px; height: 9px; }
  .box { width: 5px; height: 5px; border: 1px solid #b8bec4; background: linear-gradient(#778, #778) center / 3px 1px no-repeat, linear-gradient(#778, #778) center / 1px 3px no-repeat #f4f4f4; flex: none; margin: 0 3px 0 2px; }
  .box.open { background: linear-gradient(#778, #778) center / 3px 1px no-repeat #f4f4f4; }
  .lbl { padding-left: 3px; }
  .sub { padding-left: 4px; }
  .sub .twig { width: 6px; height: 100%; margin-left: 10px; border-left: 1px solid #ccc; background: linear-gradient(#ccc, #ccc) center / 100% 1px no-repeat; flex: none; }
  .hit { display: flex; align-items: center; width: 101px; height: 100%; padding-left: 1px; }
  .hit.sel { background: #dfdfdf; }
  .bn { width: 48px; padding-left: 4px; }
  .id { flex: 1; padding-left: 3px; }
  .inc { padding-right: 2px; }
  .split { height: 4px; flex: none; position: relative; }
  .split i { position: absolute; right: 10px; top: 0; border: 3px solid transparent; border-top-color: #333; border-bottom: 0; }
  .p1 { width: 112px; border-right: 1px solid #bbb; }
  .pname { width: 112px; height: 100%; display: flex; align-items: center; padding-left: 21px; flex: none; }
  .pname.d0 { padding-left: 11px; }
  .pname.d2 { padding-left: 31px; }
  .pname.d3 { width: 74px; margin-left: 38px; padding-left: 2px; }
  .pname.hot { background: #8fb9d6; border: 1px solid #6f9cbc; }
  .pname .box { margin: 0 4px 0 -9px; }
  .pval { padding-left: 3px; }
  .glass { width: 8px; height: 8px; margin-left: 2px; border: 1px solid #b4b4b4; background: linear-gradient(135deg, #d2d2d2, #f6f6f6); position: relative; }
  .glass:checked { border-color: #8bb5cf; background: #d8ecf8; }
  .glass:checked::before { content: ""; position: absolute; inset: 0; background: #1c6ea8; clip-path: polygon(0 50%, 20% 30%, 40% 55%, 85% 0, 100% 20%, 42% 95%); }
  .mini { margin-left: 2px; }
  .mini .ico { width: 9px; height: 9px; }
  .scroll { width: 9px; flex: none; display: flex; flex-direction: column; align-items: center; background: #f0f0f0; }
  .scroll .ico { width: 5px; height: 9px; }
  .track { flex: 1; width: 8px; position: relative; }
  .track i { position: absolute; left: 0; right: 0; background: #cdcdcd; }

  .right { flex: 1; min-width: 0; display: flex; flex-direction: column; padding: 7px 4px 0 1px; }
  .work { flex: 1; min-height: 0; display: flex; }
  aside { width: 17px; flex: none; display: flex; flex-direction: column; align-items: center; }
  aside .grip { margin: 0 0 3px; }
  .vtools { display: grid; grid-auto-rows: 1fr; row-gap: 1px; height: 188px; }
  .vtools .tool { width: 14px; height: auto; min-height: 0; }
  .vtools .lit { background: linear-gradient(#fbd29a, #f9b76c); border: 1px solid #d0a878; }
  .vtools .ico { width: 11px; height: 11px; }
  .canvas { flex: 1; position: relative; border: 1px solid #45d8dc; border-width: 1px 2px 2px 1px; background: linear-gradient(#2f5680, #56708f 40%, #8a929b 78%, #a0a0a0); }
  .info { position: absolute; right: 2px; top: 4px; color: #e4ecf4; font: 7px/9px "Liberation Sans", sans-serif; }
  .triad { position: absolute; left: 0; bottom: -1px; width: 56px; height: 50px; }
  .scale { position: absolute; right: 4px; bottom: 1px; display: flex; gap: 1px; align-items: end; line-height: 6px; }
  .scale i { width: 50px; height: 4px; border: 1px solid #333; border-top: 0; }

  .dialog { position: absolute; left: 13px; top: 43px; right: 44px; bottom: 36px; display: flex; flex-direction: column; background: #f0f0f0; border: 1px solid #2b78bd; box-shadow: 1px 2px 7px #0008; }
  .dtitle { display: flex; justify-content: space-between; height: 15px; background: #fff; flex: none; }
  .dname { display: flex; align-items: center; gap: 3px; height: 15px; width: 81px; margin-left: 4px; font-family: "Open Sans", sans-serif; position: relative; z-index: 2; }
  .dname .ico { width: 8px; height: 8px; }
  .dbtns { display: flex; gap: 18px; align-items: center; padding-right: 9px; }
  .dbtns .ico { width: 6px; height: 6px; }
  .dbody { flex: 1; min-height: 0; display: flex; }
  .steps { width: 65px; flex: none; margin: 4px 4px 4px 4px; background: #fff; border-left: 1px solid #aaa; padding: 2px 0 0 5px; border-top: 1px solid #aaa; }
  .steprows { display: grid; grid-auto-rows: 1fr; height: 146px; }
  .step { display: flex; align-items: center; position: relative; min-height: 0; line-height: 7px; }
  .step.child { padding-left: 9px; }
  .step .twig { width: 6px; height: 100%; flex: none; border-left: 1px solid #bbb; background: linear-gradient(#bbb, #bbb) center / 100% 1px no-repeat; }
  .step .twig.end { border-left-color: transparent; }
  .pm { position: absolute; left: -2px; width: 5px; height: 5px; font: 5px/4px "Liberation Sans", sans-serif; text-align: center; border: 1px solid #8090a8; background: #fff; color: #336; }
  .pick { background: #00008b; color: #fff; font-weight: 700; padding: 0 1px; }
  .mid { flex: 0 0 163px; display: flex; flex-direction: column; border: solid #999; border-width: 0 1px; margin-bottom: 1px; }
  .cap { height: 11px; line-height: 12px; flex: none; }
  .grid { flex: 1; min-height: 0; display: flex; }
  .gtable { flex: 1; background: #e0e0e0; }
  .gtable table { width: 100%; height: 98px; }
  .gtable th { font-weight: 400; text-align: left; border: 1px solid #aaa; line-height: 7px; padding: 0 1px; background: #e4e4e4; }
  .gtable td { padding: 0 1px; height: 8px; border-bottom: 1px solid #666; border-right: 1px solid #666; font: 700 6px/7px "Liberation Sans", sans-serif; }
  .gtable .st { width: 20px; }
  .gtable td.st { text-align: center; }
  .gtable .active td + td { background: #00008b; color: #fff; }
  .chk { width: 6px; height: 6px; flex: none; background: #fff; border: 1px solid #777; border-color: #666 #ddd #ddd #666; position: relative; display: inline-block; vertical-align: middle; }
  .chk:checked::before { content: ""; position: absolute; inset: 0; background: #000; clip-path: polygon(0 40%, 0 75%, 35% 100%, 100% 40%, 100% 0, 35% 65%); }
  .oldscroll { width: 9px; flex: none; display: flex; flex-direction: column; justify-content: space-between; background: #f7f7f7; }
  .oldscroll button, .arrows button { width: 9px; height: 9px; font: 6px/6px "DejaVu Sans", sans-serif; color: #777; background: #f0f0f0; border: 1px solid; border-color: #fff #999 #999 #fff; }
  .oldscroll.hz { width: auto; flex-direction: row; height: 9px; }
  .acts { display: flex; justify-content: flex-end; padding: 4px 0; flex: none; gap: 1px; }
  .btn { height: 12px; line-height: 9px; padding: 0 3px; background: #f0f0f0; border: 1px solid; border-color: #fff #777 #777 #fff; flex: none; text-align: center; }
  .acts .btn { width: 47px; }
  .acts .btn.n { width: 26px; }
  .dim { color: #999; }

  .det { flex: 1; min-width: 0; display: flex; flex-direction: column; padding-left: 6px; margin-right: 2px; border-right: 1px solid #999; }
  .dtabs { display: flex; height: 13px; align-items: center; flex: none; }
  .dtabs > button { text-align: left; height: 10px; border-right: 1px solid #888; }
  .dtabs .a { width: 25px; margin-right: 6px; }
  .dtabs .b { width: 42px; margin-right: 6px; }
  .dtabs .c { width: 49px; border: 0; }
  .dtabs .d { width: 56px; height: 16px; text-align: center; border: 0; font: 700 6px/9px "Liberation Sans", sans-serif; outline-offset: -2px; position: relative; z-index: 2; margin: 0 4px 0 1px; }
  .dtabs .e { width: 47px; }
  .sq { padding-left: 4px; }
  .arrows { display: flex; margin-left: auto; padding-right: 1px; }
  .arrows button { width: 7px; color: #000; }
  .cap2 { height: 11px; line-height: 10px; flex: none; }
  .cols { flex: 1; min-height: 0; display: flex; gap: 6px; }
  .formcol { flex: 1; min-width: 0; display: flex; flex-direction: column; }
  .form { display: flex; flex-direction: column; gap: 2px; height: 63px; flex: none; padding-left: 5px; }
  .frow { display: flex; height: 11px; gap: 1px; }
  .frow label { width: 33px; display: flex; gap: 3px; align-items: center; height: 9px; }
  .frow .btn { height: 12px; padding: 0 1px; }
  .combo { display: grid; flex: 0 0 63px; }
  .frow:first-child .combo { flex-basis: 54px; }
  .combo select { grid-area: 1 / 1; border: 1px solid; border-color: #666 #ddd #ddd #666; padding-left: 1px; }
  .combo i { grid-area: 1 / 1; justify-self: end; width: 8px; height: 9px; margin: 1px; font: 5px/6px "DejaVu Sans", sans-serif; color: #666; text-align: center; pointer-events: none; border: 1px solid; border-color: #fff #999 #999 #fff; }
  .dots { width: 8px; }
  .rr { width: 49px; margin-left: 1px; }
  .ce { width: 35px; }
  .ctree { flex: 1; background: #fff; border: solid #aaa; border-width: 1px 0 0 1px; margin: 2px 3px 19px 8px; padding: 3px 0 0 8px; }
  .ctree .step { height: 7px; padding-left: 5px; }
  .ctree .step.child { padding-left: 10px; }
  .ctree b { font: 700 6px/7px "Liberation Sans", sans-serif; }
  .cb { width: 5px; height: 5px; border: 1px solid #6f8fb8; background: #fff; margin: 0 3px 0 1px; flex: none; }
  .cb:checked { background: #456; }
  .lines { flex: 0 0 65px; display: flex; flex-direction: column; margin-right: 3px; }
  .lbody { flex: 1; display: flex; min-height: 0; }
  .ltab { flex: 1; background: #fff; position: relative; }
  .ltab table { width: 100%; height: 97px; }
  .ltab th { font-weight: 400; text-align: left; background: #ddd; line-height: 7px; padding: 0 2px; }
  .ltab td { border-bottom: 1px solid #888; border-right: 1px solid #aaa; line-height: 7px; height: 8px; padding: 0; }
  .ltab .first { background: #d4d4d4; }
  .frame { position: absolute; left: -2px; top: 6px; width: 50px; height: 21px; border: 2px solid #e81c24; }
  .upd { align-self: flex-end; width: 41px; margin: 4px 0 1px; }
  .dfoot { display: flex; height: 17px; flex: none; padding: 2px 5px 0 3px; gap: 1px; }
  .dfoot span { flex: 1; line-height: 8px; }
  .w48 { width: 48px; margin-right: 3px; }
  .w34 { width: 34px; }
  .w41, .sync { width: 42px; }
  .sync { margin-right: 6px; }

  .vis { height: 19px; flex: none; display: flex; align-items: center; padding-bottom: 3px; }
  .bar { width: 1px; height: 9px; background: #bbb; margin: 0 2px 0 1px; flex: none; }
  .mode { display: flex; align-items: center; width: 53px; height: 11px; background: #fff; }
  .mode select { flex: 1; padding-left: 1px; min-width: 0; }
  .mode .ico { width: 10px; height: 10px; }
  .dn { border: 2px solid transparent; border-top-color: #222; border-bottom: 0; margin-right: 1px; }

  .panel { display: flex; flex: none; border: solid #aaa; border-width: 1px 0; padding: 7px 0 4px; font: 7px/9px "Liberation Sans", sans-serif; margin-bottom: 1px; }
  .pcols { flex: 1; display: grid; grid-template-columns: 108fr 108fr 108fr 103fr 102fr; }
  .pcol { display: grid; grid-template-rows: repeat(7, 1fr); height: 73px; }
  .pcol button { border: solid; border-width: 1px 1px 2px 1px; border-color: #fff #999 #999 #fff; min-height: 0; line-height: 7px; }
  .pages { width: 55px; height: 73px; display: grid; grid-auto-rows: 1fr; padding-left: 5px; }
  .pages label { display: flex; align-items: center; gap: 5px; }
  .pages input { width: 6px; height: 6px; border-radius: 50%; background: #fff; border: 1px solid; border-color: #666 #e4e4e4 #e4e4e4 #666; }
  .pages input:checked { background: radial-gradient(#111 1px, #fff 2px); }

  footer { flex: none; display: flex; height: 11px; position: relative; align-items: end; }
  .msg { flex: 1; padding-left: 2px; line-height: 9px; }
  .cell { width: 50px; height: 9px; border: solid #444; border-width: 1px 0 0 1px; padding-left: 1px; }
  .cell.w { width: 57px; border-right-width: 1px; }
  .loadcol { display: flex; align-items: center; gap: 1px; width: 58px; padding-left: 3px; height: 9px; }
  .loadcol i { width: 4px; height: 4px; background: #1fa81f; flex: none; }
  .tip { position: absolute; right: 3px; top: -4px; background: #ffffe1; border: 1px solid #555; line-height: 7px; }
  .taskbar { height: 3px; flex: none; background: #05080c; }
  .taskbar i { display: block; width: 25px; height: 3px; margin-left: 53%; background: #3a3d40; }
</style>
